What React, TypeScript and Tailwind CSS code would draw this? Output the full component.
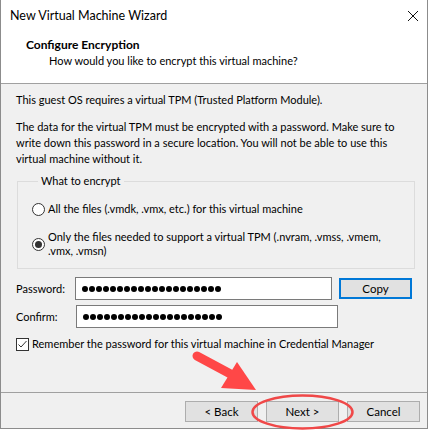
const FONT = "font-['Lato',_'DejaVu_Sans',_sans-serif]";

function PasswordDots({ count }: { count: number }) {
  return (
    <div className="flex items-center gap-[1px]">
      {Array.from({ length: count }).map((_, i) => (
        <span key={i} className="h-[6px] w-[6px] rounded-full bg-black" />
      ))}
    </div>
  );
}

function Radio({ checked }: { checked?: boolean }) {
  return (
    <span className="flex h-[13px] w-[13px] shrink-0 items-center justify-center rounded-full border border-[#333] bg-white">
      {checked && <span className="h-[7px] w-[7px] rounded-full bg-[#333]" />}
    </span>
  );
}

function Button({ label, focused }: { label: string; focused?: boolean }) {
  return (
    <button
      className={`flex h-[21px] w-[73px] items-center justify-center text-[11.5px] text-black ${
        focused ? "border-2 border-[#0078d7] bg-[#e1e1e1]" : "border border-[#adadad] bg-[#e1e1e1]"
      }`}
    >
      {label}
    </button>
  );
}

export default function App() {
  return (
    <div className={`relative h-[430px] w-[428px] bg-white text-[11px] leading-[16px] text-black ${FONT}`}>
      <div className="flex h-[429px] w-[428px] flex-col border-x border-b border-[#8c8c8c]">
        {/* title bar */}
        <div className="flex h-[31px] items-center justify-between bg-white pl-[9px] pr-[8px]">
          <span className="text-[12.5px]">New Virtual Machine Wizard</span>
          <svg viewBox="0 0 12 12" className="h-[12px] w-[12px]" stroke="#111" strokeWidth="1">
            <path d="M1 1l10 10M11 1L1 11" />
          </svg>
        </div>

        {/* page header */}
        <div className="h-[53px] border-b border-[#a0a0a0] bg-white pt-[6px]">
          <div className="pl-[25px] text-[12px] font-bold">Configure Encryption</div>
          <div className="pl-[48px]">How would you like to encrypt this virtual machine?</div>
        </div>

        <div className="flex flex-1 flex-col bg-[#f0f0f0]">
          <div className="px-[15px] pt-[8px]">
            <p>This guest OS requires a virtual TPM (Trusted Platform Module).</p>
            <p className="mt-[11px] whitespace-nowrap">
              The data for the virtual TPM must be encrypted with a password. Make sure to
              <br />
              write down this password in a secure location. You will not be able to use this
              <br />
              virtual machine without it.
            </p>

            <fieldset className="ml-[1px] mt-[6px] h-[96px] w-[398px] border border-[#dcdcdc] px-[14px]">
              <legend className="ml-[6px] px-[3px]">What to encrypt</legend>
              <label className="mt-[12px] flex items-center gap-[3px]">
                <Radio />
                <span>All the files (.vmdk, .vmx, etc.) for this virtual machine</span>
              </label>
              <label className="mt-[13px] flex items-center gap-[3px]">
                <Radio checked />
                <span className="whitespace-nowrap leading-[14px]">
                  Only the files needed to support a virtual TPM (.nvram, .vmss, .vmem,
                  <br />
                  .vmx, .vmsn)
                </span>
              </label>
            </fieldset>

            <div className="mt-[8px] flex items-center">
              <span className="w-[60px]">Password:</span>
              <div className="flex h-[23px] w-[262px] items-center border border-[#7a7a7a] bg-white pl-[6px]">
                <PasswordDots count={20} />
              </div>
              <div className="ml-[7px]">
                <Button label="Copy" focused />
              </div>
            </div>

            <div className="mt-[5px] flex items-center">
              <span className="w-[60px]">Confirm:</span>
              <div className="flex h-[23px] w-[262px] items-center border border-[#7a7a7a] bg-white pl-[6px]">
                <PasswordDots count={20} />
              </div>
            </div>

            <label className="mt-[8px] flex items-center gap-[3px]">
              <span className="flex h-[13px] w-[13px] items-center justify-center border border-[#333] bg-white">
                <svg viewBox="0 0 11 11" className="h-[11px] w-[11px]" fill="none" stroke="#333" strokeWidth="1">
                  <path d="M1.5 5.5l2.5 2.5 5.5-6" />
                </svg>
              </span>
              <span className="whitespace-nowrap">Remember the password for this virtual machine in Credential Manager</span>
            </label>
          </div>

          {/* footer buttons */}
          <div className="mt-auto border-t border-[#a0a0a0] pb-[6px] pt-[8px]">
            <div className="flex justify-end gap-[8px] pr-[7px]">
              <Button label="< Back" />
              <Button label="Next >" />
              <Button label="Cancel" />
            </div>
          </div>
        </div>
      </div>

      {/* red annotation: arrow and ring around Next */}
      <svg className="pointer-events-none absolute left-0 top-0" width="428" height="430" viewBox="0 0 428 430">
        <line x1="197" y1="356" x2="238" y2="378" stroke="#ff4747" strokeWidth="9" strokeLinecap="round" />
        <polygon points="237,362 256,390 221,388" fill="#ff4747" />
        <ellipse cx="302.5" cy="412" rx="50" ry="16.5" fill="none" stroke="#f04848" strokeWidth="2.5" />
      </svg>
    </div>
  );
}
